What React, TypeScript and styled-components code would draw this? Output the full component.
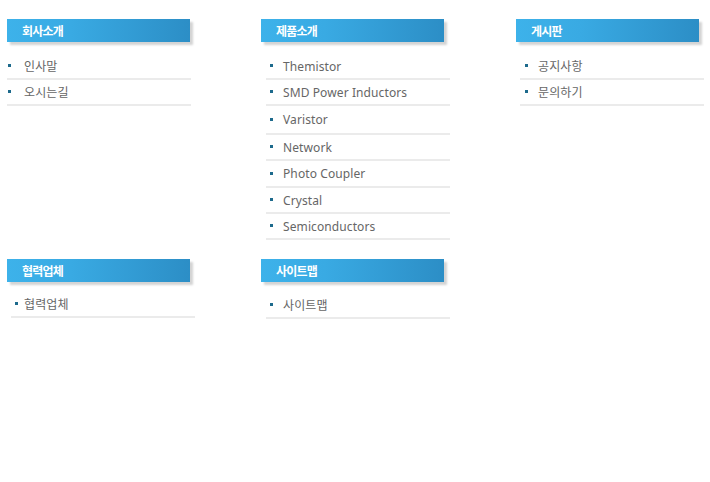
import styled, { createGlobalStyle } from 'styled-components';

type Item = { label: string; h?: number };

type Block = {
    title: string;
    headerLeft: number;
    listTop: number;
    listLeft: number;
    bullet: number;
    text: number;
    items: Item[];
};

const TOP: Block[] = [
    {
        title: '회사소개',
        headerLeft: 7,
        listTop: 12,
        listLeft: 7,
        bullet: 1,
        text: 17,
        items: [{ label: '인사말' }, { label: '오시는길' }],
    },
    {
        title: '제품소개',
        headerLeft: 6,
        listTop: 12,
        listLeft: 11,
        bullet: 4,
        text: 17,
        items: [
            { label: 'Themistor' },
            { label: 'SMD Power Inductors' },
            { label: 'Varistor', h: 29 },
            { label: 'Network' },
            { label: 'Photo Coupler', h: 27 },
            { label: 'Crystal' },
            { label: 'Semiconductors' },
        ],
    },
    {
        title: '게시판',
        headerLeft: 6,
        listTop: 12,
        listLeft: 10,
        bullet: 5,
        text: 18,
        items: [{ label: '공지사항' }, { label: '문의하기' }],
    },
];

const BOTTOM: Block[] = [
    {
        title: '협력업체',
        headerLeft: 7,
        listTop: 10,
        listLeft: 11,
        bullet: 4,
        text: 13,
        items: [{ label: '협력업체' }],
    },
    {
        title: '사이트맵',
        headerLeft: 6,
        listTop: 11,
        listLeft: 11,
        bullet: 4,
        text: 17,
        items: [{ label: '사이트맵' }],
    },
];

const GlobalStyle = createGlobalStyle`
    html, body {
        margin: 0;
        padding: 0;
        background: #fff;
    }
    body {
        font-family: "Noto Sans", "Noto Sans CJK KR", sans-serif;
    }
`;

const Page = styled.div`
    width: 710px;
    height: 482px;
    padding-top: 19px;
    box-sizing: border-box;
    display: grid;
    grid-template-columns: 255px 255px 200px;
    grid-template-rows: 240px auto;
`;

const Section = styled.div`
    display: flex;
    flex-direction: column;
`;

const Header = styled.div<{ $left: number }>`
    margin-left: ${p => p.$left}px;
    width: 168px;
    height: 23px;
    padding-left: 15px;
    display: flex;
    align-items: center;
    background: linear-gradient(to right, #3db2ea 0%, #39aae3 35%, #2c8ec6 100%);
    box-shadow: 3px 3px 2px #d4d4d4;
    color: #fff;
    font-family: "Noto Sans CJK KR", sans-serif;
    font-size: 12px;
    font-weight: bold;
    letter-spacing: -0.8px;
`;

const List = styled.ul<{ $top: number; $left: number }>`
    list-style: none;
    margin: ${p => p.$top}px 0 0 ${p => p.$left}px;
    padding: 0;
    width: 184px;
`;

const Row = styled.li<{ $h: number; $bullet: number; $text: number }>`
    position: relative;
    height: ${p => p.$h - 2}px;
    border-bottom: 2px solid #ebebeb;
    display: flex;
    align-items: center;
    padding-left: ${p => p.$text}px;
    color: #666;
    font-size: 12px;
    letter-spacing: 0.1px;

    &::before {
        content: '';
        position: absolute;
        left: ${p => p.$bullet}px;
        top: 50%;
        margin-top: -2px;
        width: 3px;
        height: 3px;
        background: #1d6a8c;
    }
`;

const Menu = ({ block }: { block: Block }) => (
    <Section>
        <Header $left={block.headerLeft}>{block.title}</Header>
        <List $top={block.listTop} $left={block.listLeft}>
            {block.items.map(item => (
                <Row
                    key={item.label}
                    $h={item.h ?? 26}
                    $bullet={block.bullet}
                    $text={block.text}
                >
                    {item.label}
                </Row>
            ))}
        </List>
    </Section>
);

const App = () => {
    return (
        <>
            <GlobalStyle />
            <Page>
                {TOP.map(block => (
                    <Menu key={block.title} block={block} />
                ))}
                {BOTTOM.map(block => (
                    <Menu key={block.title} block={block} />
                ))}
            </Page>
        </>
    );
};

export default App;
